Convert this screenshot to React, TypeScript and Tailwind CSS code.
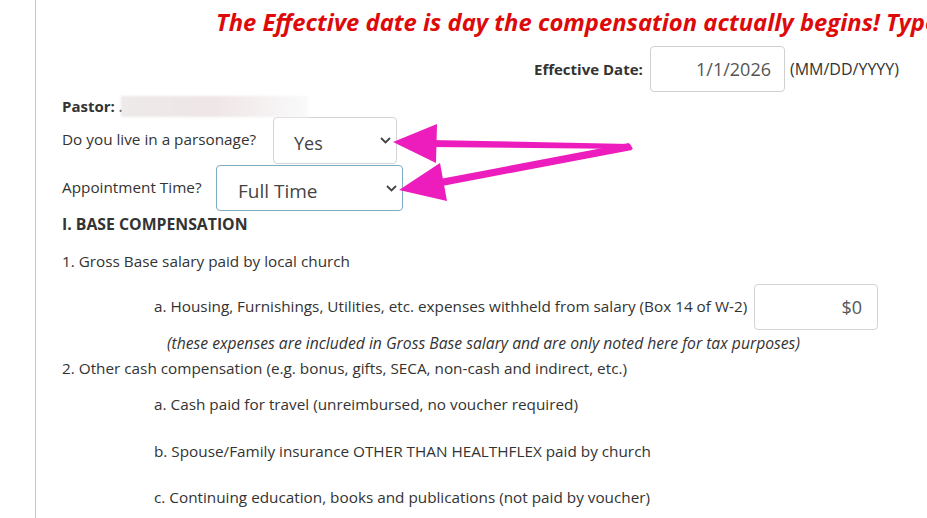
import React from "react";

const Chevron = () => (
  <svg width="11" height="7" viewBox="0 0 11 7" className="shrink-0">
    <path d="M1 1 L5.5 5.5 L10 1" fill="none" stroke="#444" strokeWidth="1.8" />
  </svg>
);

export default function App() {
  return (
    <div
      className="relative flex h-[518px] w-[927px] overflow-hidden bg-white text-[#333] text-[15.3px]"
      style={{ fontFamily: '"Open Sans", "Noto Sans", sans-serif' }}
    >
      <div className="w-[35px] shrink-0" />
      <div className="flex min-w-0 flex-1 flex-col border-l border-[#c8c8c8] pl-[26px]">
        {/* Title */}
        <div className="flex h-[46px] items-center whitespace-nowrap pl-[154px] text-[23.8px] font-bold italic text-[#dd0a0a]">
          The Effective date is day the compensation actually begins! Type the date here
        </div>

        {/* Effective date */}
        <div className="flex h-[46px] items-center pl-[472px]">
          <span className="w-[116px] shrink-0 whitespace-nowrap text-[15px] font-bold">Effective Date:</span>
          <div className="flex h-[46px] w-[135px] shrink-0 items-center justify-end rounded-[4px] border border-[#d0d0d0] pr-[13px] text-[18px] text-[#555]">
            1/1/2026
          </div>
          <span className="ml-[5px] whitespace-nowrap text-[16px]">(MM/DD/YYYY)</span>
        </div>

        {/* Pastor */}
        <div className="mt-[3px] flex h-[22px] items-center">
          <span className="w-[59px] shrink-0 whitespace-nowrap text-[15px] font-bold">Pastor: .</span>
          <div className="h-[21px] w-[187px] bg-gradient-to-r from-[#eeeaea] via-[#efe6e7] to-[#fafafa] blur-[1px]" />
        </div>

        {/* Parsonage */}
        <div className="flex h-[47px] items-center">
          <span className="w-[211px] shrink-0 whitespace-nowrap pb-[2px]">Do you live in a parsonage?</span>
          <div className="flex h-[47px] w-[124px] shrink-0 items-center justify-between rounded-[4px] border border-[#d4d4d4] pl-[20px] pr-[5px] pt-[6px] text-[18px] text-[#444]">
            <span>Yes</span>
            <span className="-mt-[6px]">
              <Chevron />
            </span>
          </div>
        </div>

        {/* Appointment */}
        <div className="mt-[1px] flex h-[46px] items-center">
          <span className="w-[154px] shrink-0 whitespace-nowrap pb-[2px]">Appointment Time?</span>
          <div className="flex h-[46px] w-[187px] shrink-0 items-center justify-between rounded-[4px] border border-[#7eabc4] pl-[21px] pr-[5px] pt-[6px] text-[19px] text-[#444]">
            <span>Full Time</span>
            <span className="-mt-[6px]">
              <Chevron />
            </span>
          </div>
        </div>

        {/* Heading */}
        <div className="mt-[1px] flex h-[26px] items-center whitespace-nowrap text-[15.8px] font-bold">I. BASE COMPENSATION</div>

        <div className="mt-[12px] flex h-[24px] items-center whitespace-nowrap pb-[2px]">1. Gross Base salary paid by local church</div>

        <div className="mt-[10px] flex h-[46px] items-center pl-[92px]">
          <span className="w-[596px] shrink-0 whitespace-nowrap pb-[2px]">
            a. Housing, Furnishings, Utilities, etc. expenses withheld from salary (Box 14 of W-2)
          </span>
          <div className="ml-[4px] flex h-[46px] w-[124px] shrink-0 items-center justify-end rounded-[4px] border border-[#d4d4d4] pr-[15px] text-[18px] text-[#555]">
            $0
          </div>
        </div>

        <div className="mt-[3px] flex h-[24px] items-center whitespace-nowrap pb-[2px] pl-[105px] text-[15.7px] italic">
          (these expenses are included in Gross Base salary and are only noted here for tax purposes)
        </div>

        <div className="flex h-[24px] items-center whitespace-nowrap pb-[2px]">
          2. Other cash compensation (e.g. bonus, gifts, SECA, non-cash and indirect, etc.)
        </div>

        <div className="mt-[12px] flex h-[24px] items-center whitespace-nowrap pb-[2px] pl-[92px]">a. Cash paid for travel (unreimbursed, no voucher required)</div>
        <div className="mt-[23px] flex h-[24px] items-center whitespace-nowrap pb-[2px] pl-[92px]">b. Spouse/Family insurance OTHER THAN HEALTHFLEX paid by church</div>
        <div className="mt-[22px] flex h-[24px] items-center whitespace-nowrap pb-[2px] pl-[92px]">c. Continuing education, books and publications (not paid by voucher)</div>
      </div>

      {/* Annotation arrows */}
      <svg className="pointer-events-none absolute left-0 top-0" width="927" height="518" viewBox="0 0 927 518">
        <g fill="#ec1cbd">
          <polygon points="393,142 437,124 436,163" />
          <polygon points="430,140 630,144 633,149 430,147" />
          <polygon points="399,190 440,163 447,201" />
          <polygon points="440,179 629,143 632,150 442,186" />
        </g>
      </svg>
    </div>
  );
}
